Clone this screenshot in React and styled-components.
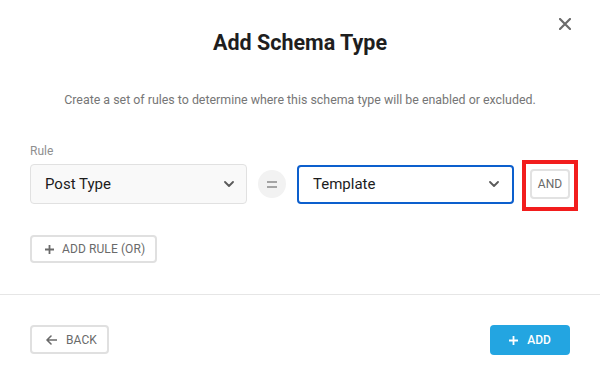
import React from "react";
import styled, { createGlobalStyle } from "styled-components";

const Global = createGlobalStyle`
  html, body { margin: 0; padding: 0; background: #fff; }
  body { font-family: Roboto, "Liberation Sans", Arial, sans-serif; -webkit-font-smoothing: antialiased; }
  * { box-sizing: border-box; }
`;

const Modal = styled.div`
  position: relative;
  width: 600px;
  height: 372px;
  background: #fff;
  display: flex;
  flex-direction: column;
  overflow: hidden;
`;

const Close = styled.button`
  position: absolute;
  top: 16px;
  right: 27px;
  width: 16px;
  height: 16px;
  padding: 0;
  border: 0;
  background: transparent;
  display: flex;
  align-items: center;
  justify-content: center;
  cursor: pointer;
`;

const Body = styled.div`
  padding: 31px 30px 0;
  display: flex;
  flex-direction: column;
`;

const Title = styled.h2`
  margin: 0;
  text-align: center;
  font-size: 21.5px;
  line-height: 24px;
  font-weight: 700;
  color: #1e1e1e;
`;

const Subtitle = styled.p`
  margin: 37px 0 0;
  text-align: center;
  font-size: 12.4px;
  line-height: 16px;
  color: #767676;
`;

const Label = styled.div`
  margin-top: 36px;
  font-size: 12px;
  line-height: 14px;
  color: #8f8f8f;
`;

const Row = styled.div`
  margin-top: 6px;
  display: flex;
  align-items: center;
`;

const Select = styled.div`
  flex: 0 0 ${p => p.$width}px;
  height: ${p => (p.$active ? 39 : 40)}px;
  border-radius: 4px;
  border: ${p => (p.$active ? "2px solid #0c5fcd" : "1px solid #e1e1e1")};
  background: ${p => (p.$active ? "#fff" : "#f9f9f9")};
  display: flex;
  align-items: center;
  justify-content: space-between;
  padding: 0 ${p => (p.$active ? 13 : 12)}px 0 14px;
  font-size: 15px;
  color: #1c1c1c;
`;

const Equals = styled.div`
  flex: 0 0 28px;
  height: 28px;
  border-radius: 50%;
  background: #f2f2f2;
  margin: 0 11px;
  display: flex;
  align-items: center;
  justify-content: center;
`;

const Highlight = styled.div`
  flex: 0 0 auto;
  margin: -4px 0 -7px 8px;
  border: 4px solid #f21d1d;
  padding: 5px 4px 8px;
  display: flex;
`;

const SmallButton = styled.button`
  width: 40px;
  height: 30px;
  padding: 0;
  border: 2px solid #e2e2e2;
  border-radius: 4px;
  background: #fff;
  font-family: inherit;
  font-size: 12px;
  color: #6a6a6a;
  cursor: pointer;
`;

const GhostButton = styled.button`
  align-self: flex-start;
  margin-top: ${p => p.$mt || 0}px;
  width: ${p => p.$w}px;
  height: ${p => p.$h || 28}px;
  padding: 0 0 0 ${p => p.$pl || 13}px;
  border: 2px solid #e0e0e0;
  border-radius: 4px;
  background: #fff;
  display: flex;
  align-items: center;
  gap: ${p => p.$gap || 8}px;
  font-family: inherit;
  font-size: 12px;
  letter-spacing: 0.1px;
  color: #6a6a6a;
  text-transform: uppercase;
  cursor: pointer;
`;

const Divider = styled.hr`
  margin: 31px 0 0;
  border: 0;
  border-top: 1px solid #e6e6e6;
`;

const Footer = styled.div`
  padding: 30px 30px 0;
  display: flex;
  justify-content: space-between;
  align-items: center;
`;

const PrimaryButton = styled.button`
  width: 80px;
  height: 30px;
  border: 0;
  border-radius: 4px;
  background: #23a5e1;
  color: #fff;
  display: flex;
  align-items: center;
  justify-content: center;
  gap: 9px;
  font-family: inherit;
  font-size: 12px;
  font-weight: 500;
  cursor: pointer;
`;

const Chevron = () => (
  <svg width="10" height="6" viewBox="0 0 10 6">
    <path d="M1 1l4 4 4-4" fill="none" stroke="#5a5a5a" strokeWidth="1.8" strokeLinecap="round" strokeLinejoin="round" />
  </svg>
);

const Plus = ({ color = "#6a6a6a" }) => (
  <svg width="9" height="9" viewBox="0 0 9 9">
    <path d="M4.5 0v9M0 4.5h9" stroke={color} strokeWidth="1.8" />
  </svg>
);

export default function App() {
  return (
    <>
      <Global />
      <Modal>
        <Close aria-label="Close">
          <svg width="12" height="12" viewBox="0 0 12 12">
            <path d="M1 1l10 10M11 1L1 11" stroke="#6b6b6b" strokeWidth="2.2" strokeLinecap="round" />
          </svg>
        </Close>
        <Body>
          <Title>Add Schema Type</Title>
          <Subtitle>Create a set of rules to determine where this schema type will be enabled or excluded.</Subtitle>
          <Label>Rule</Label>
          <Row>
            <Select $width={217}>
              <span>Post Type</span>
              <Chevron />
            </Select>
            <Equals>
              <svg width="10" height="7" viewBox="0 0 10 7">
                <path d="M0 1h10M0 6h10" stroke="#8a8a8a" strokeWidth="1.6" />
              </svg>
            </Equals>
            <Select $width={217} $active>
              <span>Template</span>
              <Chevron />
            </Select>
            <Highlight>
              <SmallButton>AND</SmallButton>
            </Highlight>
          </Row>
          <GhostButton $mt={31} $w={127}>
            <Plus />
            <span>Add Rule (Or)</span>
          </GhostButton>
        </Body>
        <Divider />
        <Footer>
          <GhostButton $w={79} $h={29} $pl={14} $gap={9}>
            <svg width="11" height="10" viewBox="0 0 11 10">
              <path d="M10.5 5H1.5M5 1L1 5l4 4" fill="none" stroke="#6a6a6a" strokeWidth="1.6" strokeLinecap="round" strokeLinejoin="round" />
            </svg>
            <span>Back</span>
          </GhostButton>
          <PrimaryButton>
            <Plus color="#fff" />
            <span>ADD</span>
          </PrimaryButton>
        </Footer>
      </Modal>
    </>
  );
}
